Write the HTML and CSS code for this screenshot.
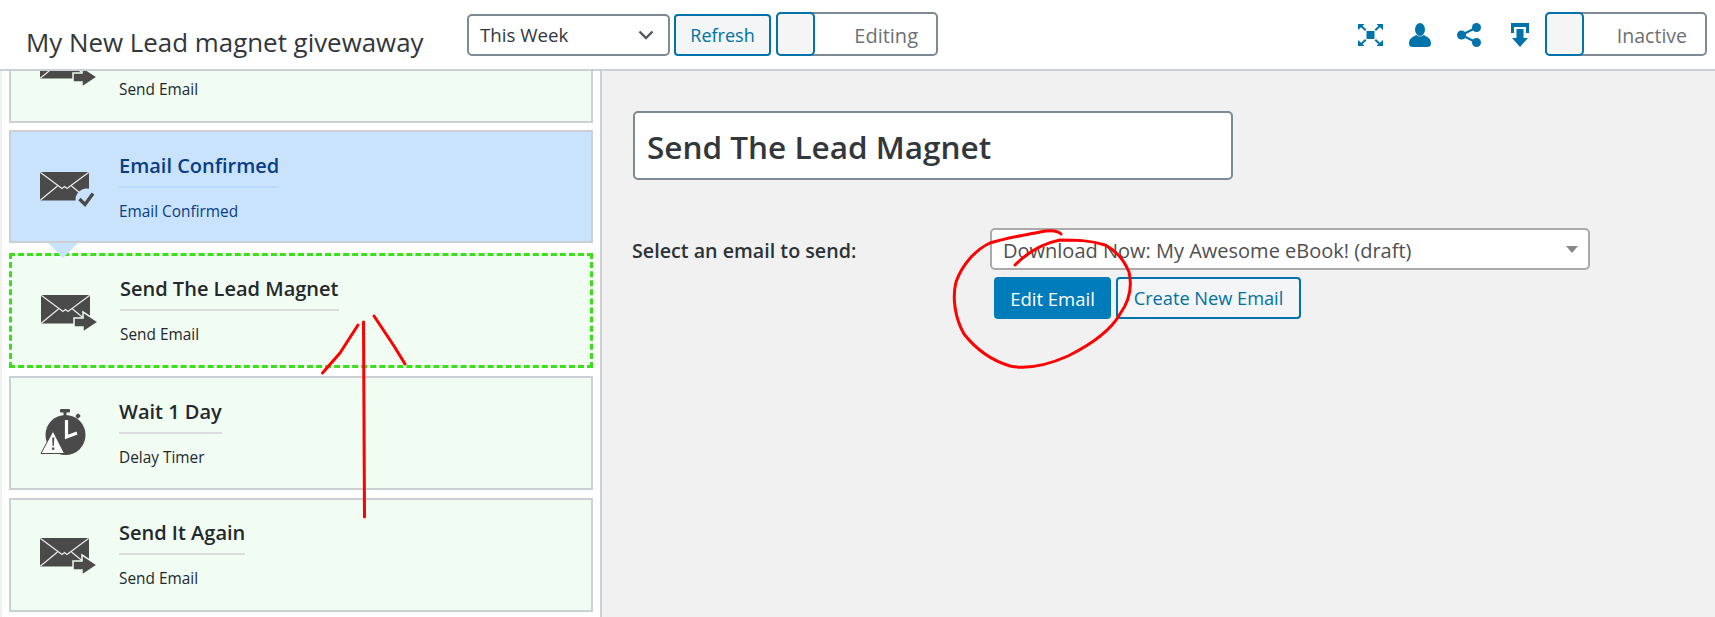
FILE: index.html
```html
<!DOCTYPE html>
<html lang="en">
<head>
<meta charset="utf-8">
<title>My New Lead magnet givewaway</title>
<link rel="stylesheet" href="styles.css">
</head>
<body>
<svg width="0" height="0" class="defs">
  <defs>
    <g id="env">
      <path d="M0 1.5Q0 0 1.500 0H47.500Q49 0 49 1.500V27Q49 28.500 47.500 28.500H1.500Q0 28.500 0 27Z" fill="#4a4a4a"/>
      <path d="M0.500 .5L22 16.500L24.500 14.500L27 16.500L48.500 .5M.5 28L17.500 14M31.500 14L48.500 28" fill="none" stroke="#ececec" stroke-width="1.200"/>
    </g>
    <g id="send">
      <use href="#env"/>
      <path d="M33 23H42V17L57 27L42 37V32H33Z" fill="#4a4a4a" stroke="var(--card)" stroke-width="1.500"/>
    </g>
  </defs>
</svg>
<div class="page">
  <header class="topbar">
    <h1 class="funnel-name">My New Lead magnet givewaway</h1>
    <div class="tools">
      <div class="range">
        <span>This Week</span>
        <svg width="16" height="10" viewBox="0 0 16 10"><path d="M1.500 1.500L8 8L14.500 1.500" fill="none" stroke="#50575e" stroke-width="2.400"/></svg>
      </div>
      <button class="btn-outline refresh">Refresh</button>
      <div class="toggle editing"><span class="knob"></span><span class="toggle-text">Editing</span></div>
    </div>
    <div class="actions">
      <svg class="a-full" width="25" height="22" viewBox="0 0 25 22" fill="#0073aa">
        <rect x="8.500" y="7" width="8" height="8"/>
        <path d="M0 0H6.500L4.600 1.900L8.500 5.500L7 7L3.100 3.300L0 6ZM25 0H18.500L20.400 1.900L16.500 5.500L18 7L21.900 3.300L25 6ZM0 22H6.500L4.600 20.100L8.500 16.500L7 15L3.100 18.700L0 16ZM25 22H18.500L20.400 20.100L16.500 16.500L18 15L21.900 18.700L25 16Z"/>
      </svg>
      <svg class="a-person" width="22" height="24" viewBox="0 0 22 24" fill="#0073aa">
        <ellipse cx="11" cy="6.500" rx="5" ry="6.500"/>
        <path d="M7.500 12C3 14 0 16 0 20.500Q0 24 4 24H18Q22 24 22 20.500C22 16 19 14 14.500 12Q11 15 7.500 12Z"/>
      </svg>
      <svg class="a-share" width="24" height="24" viewBox="0 0 24 24" fill="#0073aa">
        <circle cx="19.500" cy="4.500" r="4.500"/><circle cx="4.500" cy="12" r="4.500"/><circle cx="19.500" cy="19.500" r="4.500"/>
        <path d="M4.500 12L19.500 4.500M4.500 12L19.500 19.500" stroke="#0073aa" stroke-width="2.200"/>
      </svg>
      <svg class="a-down" width="18" height="24" viewBox="0 0 18 24" fill="#0073aa">
        <path d="M0 0H18V10H15V4H3V10H0Z"/>
        <path d="M5.500 6H12.500V15H17L9 24L1 15H5.500Z"/>
      </svg>
      <div class="toggle inactive"><span class="knob"></span><span class="toggle-text">Inactive</span></div>
    </div>
  </header>

  <div class="workspace">
    <aside class="steps">
      <div class="steps-list">
        <article class="step step-first">
          <svg class="step-icon" width="60" height="40" viewBox="0 0 60 40"><use href="#send"/></svg>
          <div class="step-body"><p class="step-sub">Send Email</p></div>
        </article>
        <article class="step step-trigger">
          <svg class="step-icon" width="60" height="40" viewBox="0 0 60 40">
            <use href="#env"/>
            <circle cx="47" cy="28" r="11.500" fill="#c9e3fd"/>
            <path d="M39.500 27L45 32.500L53 21.500" fill="none" stroke="#4a4a4a" stroke-width="3.400"/>
          </svg>
          <div class="step-body"><h3 class="step-title">Email Confirmed</h3><p class="step-sub">Email Confirmed</p></div>
          <span class="notch"></span>
        </article>
        <article class="step step-active">
          <svg class="step-icon" width="60" height="40" viewBox="0 0 60 40"><use href="#send"/></svg>
          <div class="step-body"><h3 class="step-title">Send The Lead Magnet</h3><p class="step-sub">Send Email</p></div>
        </article>
        <article class="step step-delay">
          <svg class="step-icon" width="60" height="46" viewBox="0 0 60 46">
            <rect x="20" y="0" width="10" height="3.500" rx="1" fill="#4a4a4a"/>
            <rect x="23.500" y="2" width="3" height="6" fill="#4a4a4a"/>
            <rect x="36" y="5" width="4" height="4" rx="1" fill="#4a4a4a" transform="rotate(40 38 7)"/>
            <circle cx="25.500" cy="26" r="20" fill="#4a4a4a"/>
            <path d="M26.500 11V28L37 24" fill="none" stroke="#fff" stroke-width="3.200"/>
            <path d="M13 22L24.500 44.500H1Z" fill="#fff" stroke="#4a4a4a" stroke-width="1"/>
            <path d="M12.200 28.500H14.200L13.800 37H12.600Z" fill="#4a4a4a"/>
            <rect x="12" y="38.500" width="2.300" height="2.300" fill="#4a4a4a"/>
          </svg>
          <div class="step-body"><h3 class="step-title">Wait 1 Day</h3><p class="step-sub">Delay Timer</p></div>
        </article>
        <article class="step step-last">
          <svg class="step-icon" width="60" height="40" viewBox="0 0 60 40"><use href="#send"/></svg>
          <div class="step-body"><h3 class="step-title">Send It Again</h3><p class="step-sub">Send Email</p></div>
        </article>
      </div>
    </aside>
    <main class="editor">
      <div class="name-input">Send The Lead Magnet</div>
      <div class="email-row">
        <label class="email-label">Select an email to send:</label>
        <div class="email-control">
          <div class="email-select">
            <span class="email-value">Download Now: My Awesome eBook! (draft)</span>
            <span class="caret"></span>
          </div>
          <div class="email-buttons">
            <button class="btn-primary">Edit Email</button>
            <button class="btn-outline create">Create New Email</button>
          </div>
        </div>
      </div>
    </main>
  </div>

  <svg class="annotations" width="1715" height="617" viewBox="0 0 1715 617">
    <g fill="none" stroke="#f00" stroke-width="3" stroke-linecap="round" stroke-linejoin="round">
      <path d="M363.500 322L364 420L364.500 517"/>
      <path d="M358 325L340 353L322.500 373"/>
      <path d="M374 316L394 346L405 364"/>
      <path d="M1061 234C1058 231 1050 230 1040 232C1025 235 1005 238 990 243C975 250 962 265 956 282C952 298 955 318 964 334C975 348 990 360 1010 366C1030 370 1050 364 1068 356C1090 345 1110 332 1120 314C1130 300 1132 285 1129 272C1124 260 1115 250 1105 245C1090 240 1075 240 1060 240C1045 243 1030 250 1015 265"/>
    </g>
  </svg>
</div>
</body>
</html>
```

FILE: styles.css
```css
* { box-sizing: border-box; }
html, body { margin: 0; padding: 0; height: 100%; overflow: hidden; background: #fff; }
body { font-family: "Open Sans", "Noto Sans", "Liberation Sans", sans-serif; color: #23282d; }
.defs { position: absolute; }
.page { position: relative; width: 1715px; height: 617px; display: flex; flex-direction: column; overflow: hidden; }

.topbar { height: 71px; flex: none; display: flex; align-items: flex-start; background: #fff; border-bottom: 2px solid #ccd0d4; position: relative; z-index: 2; padding-top: 12px; }
.funnel-name { margin: 14px 0 0 26px; width: 441px; font-size: 25.900px; font-weight: 400; line-height: 32px; color: #32373c; white-space: nowrap; }
.tools { display: flex; gap: 4px; align-items: flex-start; }
.range { margin-top: 2px; width: 203px; height: 42px; display: flex; align-items: center; justify-content: space-between; padding: 0 14px 0 11px; border: 2px solid #7e8993; border-radius: 5px; font-size: 18.700px; color: #32373c; }
.range span { position: relative; top: -1px; }
button { font-family: inherit; cursor: pointer; }
.btn-outline { border: 2px solid #0073aa; border-radius: 4px; background: #f3f5f6; color: #0071a1; font-size: 18px; padding: 0; }
.refresh { margin-top: 2px; width: 97px; height: 42px; margin-right: 1px; }
.toggle { display: flex; height: 44px; border: 2px solid #7e8993; border-radius: 5px; background: #fff; width: 162px; position: relative; color: #6c7074; font-size: 20px; align-items: center; justify-content: flex-end; padding-top: 2px; }
.knob { position: absolute; left: -2px; top: -2px; bottom: -2px; width: 39px; background: #f5f5f5; border: 2px solid #0073aa; border-radius: 5px; }
.editing .toggle-text { margin-right: 18px; }
.inactive .toggle-text { margin-right: 18px; font-size: 19.500px; }
.actions { margin-left: auto; display: flex; align-items: flex-start; padding-right: 8px; }
.a-full { margin-top: 12px; margin-right: 26px; }
.a-person { margin-top: 11px; margin-right: 26px; }
.a-share { margin-top: 11px; margin-right: 30px; }
.a-down { margin-top: 11px; margin-right: 16px; }

.workspace { flex: 1; display: flex; min-height: 0; }
.steps { width: 602px; flex: none; overflow: hidden; background: #fff; border-left: 2px solid #f1f1f1; border-right: 2px solid #ccd0d4; padding-left: 7px; }
.steps-list { width: 584px; margin-top: -61px; display: flex; flex-direction: column; gap: 8px; }
.step { --card: #f1fcf3; height: 113px; flex: none; display: flex; position: relative; background: var(--card); border: 2px solid #ccd0d4; padding-left: 29px; align-items: center; }
.step-first { margin-bottom: -1px; }
.step-icon { flex: none; display: block; width: 60px; margin: 7px 19px 0 0; overflow: visible; }
.step-delay { height: 114px; }
.step-delay .step-icon { margin-top: -2px; }
.step-last { height: 114px; }
.step-last .step-icon { margin-top: 6px; }
.step-body { display: flex; flex-direction: column; align-items: flex-start; align-self: flex-start; padding-top: 20px; }
.step-first .step-body { padding-top: 54px; }
.step-last .step-body { padding-top: 19px; }
.step-title { margin: 0; font-size: 20px; font-weight: 600; line-height: 28px; padding-bottom: 6px; border-bottom: 2px solid #dcdcde; color: #23282d; white-space: nowrap; }
.step-sub { margin: 13px 0 0; font-size: 15.400px; line-height: 21px; color: #23282d; }
.step-trigger { --card: #c9e3fd; }
.step-trigger .step-icon { margin-top: 11px; }
.step-trigger .step-title { color: #0a3d85; border-bottom-color: #b9dafc; }
.step-trigger .step-sub { color: #0a3d85; }
.step-active { height: 115px; margin-top: 2px; border: 3px dashed #3ce01a; padding-left: 29px; }
.step-active .step-icon { margin-top: 9px; }
.step-active .step-body { padding-top: 19px; }
.notch { position: absolute; left: 37px; top: 111px; width: 0; height: 0; border-left: 15px solid transparent; border-right: 15px solid transparent; border-top: 15px solid #c9e3fd; z-index: 1; }

.editor { flex: 1; background: #f1f1f1; padding: 40px 0 0 31px; }
.name-input { width: 600px; height: 69px; background: #fff; border: 2px solid #7e8993; border-radius: 5px; padding: 4px 0 0 12px; font-size: 31.500px; font-weight: 600; line-height: 60px; color: #32373c; }
.email-row { display: flex; margin-top: 48px; }
.email-label { width: 358px; font-size: 19.700px; font-weight: 600; line-height: 46px; color: #2c3338; margin-left: -1px; white-space: nowrap; }
.email-control { display: flex; flex-direction: column; }
.email-select { width: 600px; height: 42px; background: #fff; border: 2px solid #aaa; border-radius: 5px; display: flex; align-items: center; justify-content: space-between; padding: 3px 10px 0 11px; font-size: 20px; color: #4f4f4f; }
.caret { width: 0; height: 0; border-left: 6px solid transparent; border-right: 6px solid transparent; border-top: 7px solid #888; margin-top: -3px; }
.email-buttons { display: flex; gap: 5px; margin: 7px 0 0 4px; }
.btn-primary { width: 117px; height: 42px; background: #007cba; color: #fff; border: 0; border-radius: 4px; font-size: 18.500px; padding: 0; }
.create { width: 185px; height: 42px; font-size: 18.200px; }

.annotations { position: absolute; left: 0; top: 0; pointer-events: none; z-index: 3; }
```
